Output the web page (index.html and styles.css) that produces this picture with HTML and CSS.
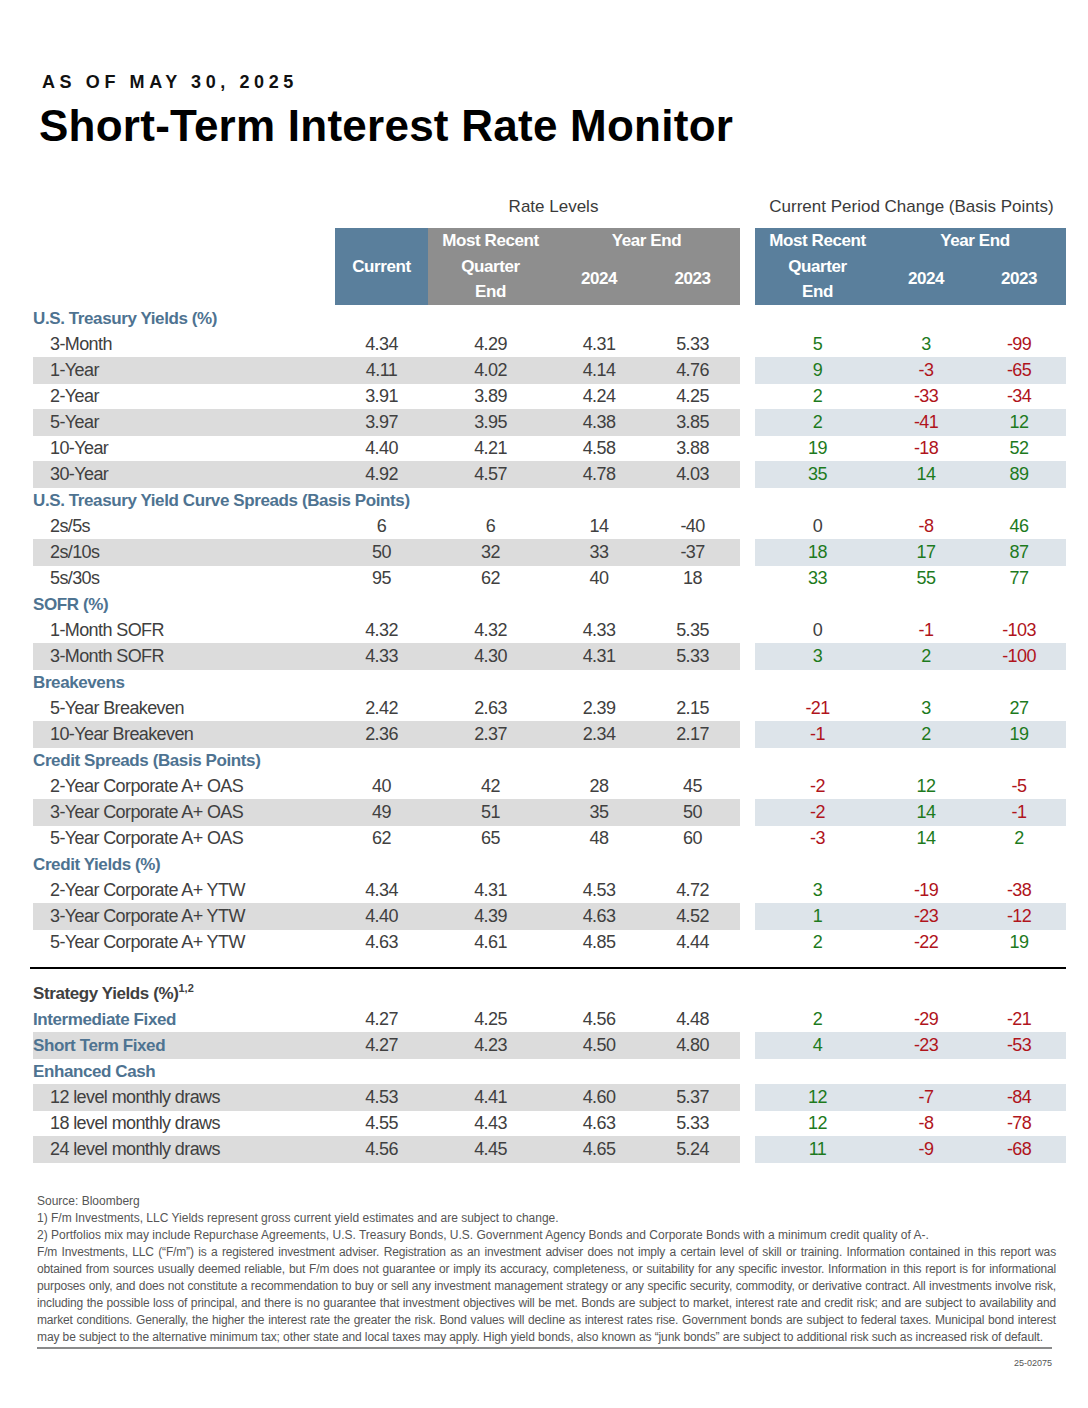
FILE: index.html
```html
<!DOCTYPE html>
<html lang="en">
<head>
<meta charset="utf-8">
<title>Short-Term Interest Rate Monitor</title>
<link rel="stylesheet" href="styles.css">
</head>
<body>
<div class="page">
  <div class="asof">AS OF MAY 30, 2025</div>
  <h1 class="title">Short-Term Interest Rate Monitor</h1>

  <div class="table">
    <div class="grp">
      <div class="grp-rate">Rate Levels</div>
      <div class="grp-chg">Current Period Change (Basis Points)</div>
    </div>

    <div class="head">
      <div class="h h-cur">Current</div>
      <div class="h h-mrq gray">Most Recent<br>Quarter<br>End</div>
      <div class="h h-ye gray">Year End</div>
      <div class="h h-24 gray">2024</div>
      <div class="h h-23 gray">2023</div>
      <div class="h h-rmrq">Most Recent<br>Quarter<br>End</div>
      <div class="h h-rye">Year End</div>
      <div class="h h-r24">2024</div>
      <div class="h h-r23">2023</div>
    </div>

    <div class="row sec"><div class="lbl">U.S. Treasury Yields (%)</div></div>
    <div class="row"><div class="lbl sub">3-Month</div><div class="c">4.34</div><div class="c">4.29</div><div class="c">4.31</div><div class="c">5.33</div><div class="sp"></div><div class="r up">5</div><div class="r up">3</div><div class="r dn">-99</div></div>
    <div class="row alt"><div class="lbl sub">1-Year</div><div class="c">4.11</div><div class="c">4.02</div><div class="c">4.14</div><div class="c">4.76</div><div class="sp"></div><div class="r up">9</div><div class="r dn">-3</div><div class="r dn">-65</div></div>
    <div class="row"><div class="lbl sub">2-Year</div><div class="c">3.91</div><div class="c">3.89</div><div class="c">4.24</div><div class="c">4.25</div><div class="sp"></div><div class="r up">2</div><div class="r dn">-33</div><div class="r dn">-34</div></div>
    <div class="row alt"><div class="lbl sub">5-Year</div><div class="c">3.97</div><div class="c">3.95</div><div class="c">4.38</div><div class="c">3.85</div><div class="sp"></div><div class="r up">2</div><div class="r dn">-41</div><div class="r up">12</div></div>
    <div class="row"><div class="lbl sub">10-Year</div><div class="c">4.40</div><div class="c">4.21</div><div class="c">4.58</div><div class="c">3.88</div><div class="sp"></div><div class="r up">19</div><div class="r dn">-18</div><div class="r up">52</div></div>
    <div class="row alt"><div class="lbl sub">30-Year</div><div class="c">4.92</div><div class="c">4.57</div><div class="c">4.78</div><div class="c">4.03</div><div class="sp"></div><div class="r up">35</div><div class="r up">14</div><div class="r up">89</div></div>

    <div class="row sec"><div class="lbl">U.S. Treasury Yield Curve Spreads (Basis Points)</div></div>
    <div class="row"><div class="lbl sub">2s/5s</div><div class="c">6</div><div class="c">6</div><div class="c">14</div><div class="c">-40</div><div class="sp"></div><div class="r">0</div><div class="r dn">-8</div><div class="r up">46</div></div>
    <div class="row alt"><div class="lbl sub">2s/10s</div><div class="c">50</div><div class="c">32</div><div class="c">33</div><div class="c">-37</div><div class="sp"></div><div class="r up">18</div><div class="r up">17</div><div class="r up">87</div></div>
    <div class="row"><div class="lbl sub">5s/30s</div><div class="c">95</div><div class="c">62</div><div class="c">40</div><div class="c">18</div><div class="sp"></div><div class="r up">33</div><div class="r up">55</div><div class="r up">77</div></div>

    <div class="row sec"><div class="lbl">SOFR (%)</div></div>
    <div class="row"><div class="lbl sub">1-Month SOFR</div><div class="c">4.32</div><div class="c">4.32</div><div class="c">4.33</div><div class="c">5.35</div><div class="sp"></div><div class="r">0</div><div class="r dn">-1</div><div class="r dn">-103</div></div>
    <div class="row alt"><div class="lbl sub">3-Month SOFR</div><div class="c">4.33</div><div class="c">4.30</div><div class="c">4.31</div><div class="c">5.33</div><div class="sp"></div><div class="r up">3</div><div class="r up">2</div><div class="r dn">-100</div></div>

    <div class="row sec"><div class="lbl">Breakevens</div></div>
    <div class="row"><div class="lbl sub">5-Year Breakeven</div><div class="c">2.42</div><div class="c">2.63</div><div class="c">2.39</div><div class="c">2.15</div><div class="sp"></div><div class="r dn">-21</div><div class="r up">3</div><div class="r up">27</div></div>
    <div class="row alt"><div class="lbl sub">10-Year Breakeven</div><div class="c">2.36</div><div class="c">2.37</div><div class="c">2.34</div><div class="c">2.17</div><div class="sp"></div><div class="r dn">-1</div><div class="r up">2</div><div class="r up">19</div></div>

    <div class="row sec"><div class="lbl">Credit Spreads (Basis Points)</div></div>
    <div class="row"><div class="lbl sub">2-Year Corporate A+ OAS</div><div class="c">40</div><div class="c">42</div><div class="c">28</div><div class="c">45</div><div class="sp"></div><div class="r dn">-2</div><div class="r up">12</div><div class="r dn">-5</div></div>
    <div class="row alt"><div class="lbl sub">3-Year Corporate A+ OAS</div><div class="c">49</div><div class="c">51</div><div class="c">35</div><div class="c">50</div><div class="sp"></div><div class="r dn">-2</div><div class="r up">14</div><div class="r dn">-1</div></div>
    <div class="row"><div class="lbl sub">5-Year Corporate A+ OAS</div><div class="c">62</div><div class="c">65</div><div class="c">48</div><div class="c">60</div><div class="sp"></div><div class="r dn">-3</div><div class="r up">14</div><div class="r up">2</div></div>

    <div class="row sec"><div class="lbl">Credit Yields (%)</div></div>
    <div class="row"><div class="lbl sub">2-Year Corporate A+ YTW</div><div class="c">4.34</div><div class="c">4.31</div><div class="c">4.53</div><div class="c">4.72</div><div class="sp"></div><div class="r up">3</div><div class="r dn">-19</div><div class="r dn">-38</div></div>
    <div class="row alt"><div class="lbl sub">3-Year Corporate A+ YTW</div><div class="c">4.40</div><div class="c">4.39</div><div class="c">4.63</div><div class="c">4.52</div><div class="sp"></div><div class="r up">1</div><div class="r dn">-23</div><div class="r dn">-12</div></div>
    <div class="row"><div class="lbl sub">5-Year Corporate A+ YTW</div><div class="c">4.63</div><div class="c">4.61</div><div class="c">4.85</div><div class="c">4.44</div><div class="sp"></div><div class="r up">2</div><div class="r dn">-22</div><div class="r up">19</div></div>

    <div class="rule"></div>

    <div class="row sec strat"><div class="lbl">Strategy Yields (%)<sup>1,2</sup></div></div>
    <div class="row"><div class="lbl blue">Intermediate Fixed</div><div class="c">4.27</div><div class="c">4.25</div><div class="c">4.56</div><div class="c">4.48</div><div class="sp"></div><div class="r up">2</div><div class="r dn">-29</div><div class="r dn">-21</div></div>
    <div class="row alt"><div class="lbl blue">Short Term Fixed</div><div class="c">4.27</div><div class="c">4.23</div><div class="c">4.50</div><div class="c">4.80</div><div class="sp"></div><div class="r up">4</div><div class="r dn">-23</div><div class="r dn">-53</div></div>
    <div class="row sec"><div class="lbl">Enhanced Cash</div></div>
    <div class="row alt"><div class="lbl sub">12 level monthly draws</div><div class="c">4.53</div><div class="c">4.41</div><div class="c">4.60</div><div class="c">5.37</div><div class="sp"></div><div class="r up">12</div><div class="r dn">-7</div><div class="r dn">-84</div></div>
    <div class="row"><div class="lbl sub">18 level monthly draws</div><div class="c">4.55</div><div class="c">4.43</div><div class="c">4.63</div><div class="c">5.33</div><div class="sp"></div><div class="r up">12</div><div class="r dn">-8</div><div class="r dn">-78</div></div>
    <div class="row alt"><div class="lbl sub">24 level monthly draws</div><div class="c">4.56</div><div class="c">4.45</div><div class="c">4.65</div><div class="c">5.24</div><div class="sp"></div><div class="r up">11</div><div class="r dn">-9</div><div class="r dn">-68</div></div>
  </div>

  <div class="notes">
    <div class="nl">Source: Bloomberg</div>
    <div class="nl">1) F/m Investments, LLC Yields represent gross current yield estimates and are subject to change.</div>
    <div class="nl">2) Portfolios mix may include Repurchase Agreements, U.S. Treasury Bonds, U.S. Government Agency Bonds and Corporate Bonds with a minimum credit quality of A-.</div>
    <div class="nl j">F/m Investments, LLC (“F/m”) is a registered investment adviser. Registration as an investment adviser does not imply a certain level of skill or training. Information contained in this report was</div>
    <div class="nl j">obtained from sources usually deemed reliable, but F/m does not guarantee or imply its accuracy, completeness, or suitability for any specific investor. Information in this report is for informational</div>
    <div class="nl j">purposes only, and does not constitute a recommendation to buy or sell any investment management strategy or any specific security, commodity, or derivative contract. All investments involve risk,</div>
    <div class="nl j">including the possible loss of principal, and there is no guarantee that investment objectives will be met. Bonds are subject to market, interest rate and credit risk; and are subject to availability and</div>
    <div class="nl j">market conditions. Generally, the higher the interest rate the greater the risk. Bond values will decline as interest rates rise. Government bonds are subject to federal taxes. Municipal bond interest</div>
    <div class="nl last">may be subject to the alternative minimum tax; other state and local taxes may apply. High yield bonds, also known as “junk bonds” are subject to additional risk such as increased risk of default.</div>
  </div>
  <div class="code">25-02075</div>
</div>
</body>
</html>
```
FILE: styles.css
```css
* { box-sizing: border-box; }
body {
  margin: 0;
  background: #fff;
  font-family: "Liberation Sans", Arial, sans-serif;
  color: #404040;
}
.page { width: 1088px; padding-top: 73px; }

.asof {
  margin-left: 42px;
  font-size: 18px;
  line-height: 18px;
  font-weight: bold;
  letter-spacing: 4.6px;
  color: #111;
}
.title {
  margin: 13px 0 0 39px;
  font-size: 44px;
  line-height: 44px;
  font-weight: bold;
  letter-spacing: 0.25px;
  color: #000;
}

.table { margin: 49px 0 0 33px; width: 1033px; }

.grp, .head, .row {
  display: grid;
  grid-template-columns: 302px 93px 125px 92px 95px 15px 125px 92px 94px;
}
.grp { height: 20px; line-height: 20px; font-size: 17px; color: #3a3a3a; margin-bottom: 11px; }
.grp-rate { grid-column: 2 / 6; text-align: center; padding-left: 32px; }
.grp-chg { grid-column: 7 / 10; text-align: center; padding-left: 2px; white-space: nowrap; }

.head {
  grid-template-rows: 25.67px 25.67px 25.67px;
  color: #fff;
  font-weight: bold;
  font-size: 17px;
  letter-spacing: -0.4px;
  line-height: 25.67px;
}
.h { text-align: center; background: #5a7f9c; }
.h.gray { background: #8e8e8e; }
.h-cur { grid-column: 2; grid-row: 1 / 4; display: flex; align-items: center; justify-content: center; }
.h-mrq { grid-column: 3; grid-row: 1 / 4; }
.h-ye { grid-column: 4 / 6; grid-row: 1; }
.h-24 { grid-column: 4; grid-row: 2 / 4; display: flex; align-items: center; justify-content: center; }
.h-23 { grid-column: 5; grid-row: 2 / 4; display: flex; align-items: center; justify-content: center; }
.h-rmrq { grid-column: 7; grid-row: 1 / 4; }
.h-rye { grid-column: 8 / 10; grid-row: 1; padding-left: 4px; }
.h-r24 { grid-column: 8; grid-row: 2 / 4; display: flex; align-items: center; justify-content: center; }
.h-r23 { grid-column: 9; grid-row: 2 / 4; display: flex; align-items: center; justify-content: center; }

.row {
  height: 26px;
  line-height: 27px;
  font-size: 18px;
  letter-spacing: -0.6px;
}
.lbl { white-space: nowrap; }
.lbl.sub { padding-left: 17px; }
.c, .r { text-align: center; }
.alt .lbl, .alt .c { background: #dcdcdc; }
.alt .r { background: #dde4ea; }
.up { color: #1d7a1d; }
.dn { color: #b0141c; }

.sec .lbl, .lbl.blue {
  grid-column: 1 / 6;
  font-weight: bold;
  font-size: 17px;
  letter-spacing: -0.4px;
  color: #4e7391;
}
.lbl.blue { grid-column: auto; }
.strat .lbl { color: #404040; }
.strat sup { font-size: 11px; line-height: 0; vertical-align: 7px; letter-spacing: 0; }

.rule {
  height: 2px;
  background: #000;
  margin: 12px 0 11px -3px;
  width: 1036px;
}

.notes {
  margin: 31px 0 0 37px;
  width: 1019px;
  font-size: 12px;
  line-height: 17px;
  color: #555;
}
.nl { white-space: nowrap; }
.nl.j { white-space: normal; text-align: justify; text-align-last: justify; letter-spacing: -0.15px; }
.nl.last { letter-spacing: -0.1px; border-bottom: 2px solid #8a8a8a; width: 1015px; padding-bottom: 1px; }
.code {
  width: 1052px;
  text-align: right;
  font-size: 9px;
  line-height: 12px;
  margin-top: 8px;
  color: #555;
}
```
